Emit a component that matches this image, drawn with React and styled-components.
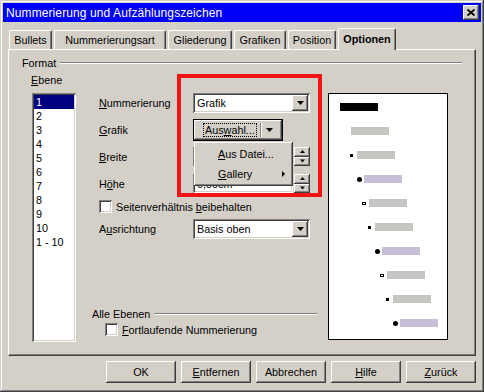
import React from 'react';
import styled, { createGlobalStyle } from 'styled-components';

const FACE = '#d4d0c8';
const RAISED = `box-shadow: inset -1px -1px #404040, inset 1px 1px #ffffff, inset -2px -2px #808080, inset 2px 2px ${FACE};`;
const SUNKEN = `box-shadow: inset 1px 1px #808080, inset -1px -1px #ffffff, inset 2px 2px #404040, inset -2px -2px ${FACE};`;

const Global = createGlobalStyle`
  html, body { margin: 0; padding: 0; background: ${FACE}; }
  body { font-family: "Liberation Sans", Arial, sans-serif; font-size: 10.8px; color: #000; }
  * { box-sizing: border-box; }
`;

const Window = styled.div`
  width: 484px;
  height: 392px;
  background: ${FACE};
  padding: 3px;
  display: flex;
  flex-direction: column;
  box-shadow: inset -1px -1px #404040, inset 1px 1px ${FACE}, inset -2px -2px #808080, inset 2px 2px #ffffff;
`;

const TitleBar = styled.div`
  height: 19px;
  background: #0000f6;
  display: flex;
  align-items: center;
  justify-content: space-between;
  padding: 0 2px 0 3px;
`;

const TitleText = styled.span`
  color: #fff;
  font-size: 12px;
  letter-spacing: 0.1px;
`;

const CloseBtn = styled.div`
  width: 16px;
  height: 15px;
  background: ${FACE};
  ${RAISED}
  display: flex;
  align-items: center;
  justify-content: center;
`;

const Content = styled.div`
  flex: 1;
  display: flex;
  flex-direction: column;
  padding: 0 5px 0 5px;
`;

const TabStrip = styled.div`
  margin-top: 6px;
  height: 21px;
  display: flex;
  align-items: flex-end;
  padding-left: 1px;
  position: relative;
  z-index: 1;
`;

const Tab = styled.div`
  width: ${p => p.$w}px;
  height: ${p => (p.$active ? 22 : 19)}px;
  margin-right: 2px;
  margin-bottom: ${p => (p.$active ? -1 : 0)}px;
  background: ${FACE};
  border-top: 1px solid #fff;
  border-left: 1px solid #fff;
  border-right: 1px solid #404040;
  border-top-left-radius: 2px;
  border-top-right-radius: 2px;
  box-shadow: inset -1px 0 #808080;
  display: flex;
  align-items: center;
  justify-content: center;
  padding-bottom: ${p => (p.$active ? 2 : 0)}px;
  font-weight: ${p => (p.$active ? 700 : 400)};
`;

const Panel = styled.div`
  height: 307px;
  background: ${FACE};
  border-top: 1px solid #fff;
  border-left: 1px solid #fff;
  border-right: 1px solid #404040;
  border-bottom: 1px solid #404040;
  box-shadow: inset -1px -1px #808080;
  display: flex;
  flex-direction: column;
`;

const GroupHeader = styled.div`
  display: flex;
  align-items: center;
  height: 13px;
  margin: ${p => p.$m};
  width: ${p => p.$w || 'auto'};
`;

const Legend = styled.span`
  padding-right: 4px;
  white-space: nowrap;
`;

const Etched = styled.div`
  flex: 1;
  height: 2px;
  border-top: 1px solid #808080;
  border-bottom: 1px solid #fff;
`;

const Body = styled.div`
  display: flex;
  margin: 5px 0 0 22px;
`;

const ListCol = styled.div`
  width: 46px;
  display: flex;
  flex-direction: column;
`;

const Label = styled.div`
  height: 13px;
  line-height: 13px;
  white-space: nowrap;
`;

const ListBox = styled.div`
  margin: 6px 0 0 1px;
  width: 44px;
  height: 249px;
  background: #fff;
  ${SUNKEN}
  padding: 2px;
`;

const ListItem = styled.div`
  height: 14px;
  line-height: 14px;
  padding-left: 2px;
  background: ${p => (p.$sel ? '#000080' : 'transparent')};
  color: ${p => (p.$sel ? '#fff' : '#000')};
`;

const FieldsCol = styled.div`
  margin: 19px 0 0 22px;
  width: 222px;
  position: relative;
  display: flex;
  flex-direction: column;
`;

const FieldRow = styled.div`
  display: flex;
  align-items: center;
  height: ${p => p.$h}px;
  margin-top: ${p => p.$mt || 0}px;
  position: relative;
`;

const FieldLabel = styled.div`
  width: 94px;
  white-space: nowrap;
`;

const Combo = styled.div`
  width: 117px;
  height: 20px;
  background: #fff;
  ${SUNKEN}
  display: flex;
  align-items: center;
  padding: 2px;
`;

const ComboText = styled.div`
  flex: 1;
  padding-left: 2px;
  white-space: nowrap;
  overflow: hidden;
`;

const DropBtn = styled.div`
  width: 16px;
  height: 16px;
  background: ${FACE};
  ${RAISED}
  display: flex;
  align-items: center;
  justify-content: center;
`;

const MenuButton = styled.div`
  width: 90px;
  height: 22px;
  border: 1px solid #000;
  background: ${FACE};
  position: relative;
`;

const MenuButtonInner = styled.div`
  height: 100%;
  ${RAISED}
  display: flex;
  align-items: center;
  padding-left: 10px;
`;

const Focus = styled.span`
  outline: 1px dotted #000;
  outline-offset: 0px;
  padding: 0 1px;
  line-height: 12px;
`;

const MenuSep = styled.div`
  width: 2px;
  height: 14px;
  margin-left: 4px;
  border-left: 1px solid #808080;
  border-right: 1px solid #fff;
`;

const MenuArrow = styled.div`
  margin-left: 4px;
  display: flex;
  align-items: center;
`;

const Popup = styled.div`
  position: absolute;
  left: 0px;
  top: 22px;
  width: 99px;
  height: 44px;
  background: ${FACE};
  ${RAISED}
  padding: 2px;
  z-index: 2;
`;

const MenuItem = styled.div`
  height: 20px;
  display: flex;
  align-items: center;
  justify-content: space-between;
  padding: 0 6px 0 22px;
  white-space: nowrap;
`;

const SpinField = styled.div`
  width: 117px;
  height: 19px;
  display: flex;
  align-items: stretch;
`;

const SpinInput = styled.div`
  flex: 1;
  background: #fff;
  ${SUNKEN}
  padding: 4px 0 0 4px;
  white-space: nowrap;
  overflow: hidden;
`;

const SpinButtons = styled.div`
  width: 16px;
  margin-left: 1px;
  display: flex;
  flex-direction: column;
`;

const SpinHalf = styled.div`
  flex: 1;
  background: ${FACE};
  ${RAISED}
  display: flex;
  align-items: center;
  justify-content: center;
`;

const Check = styled.div`
  width: 13px;
  height: 13px;
  background: #fff;
  ${SUNKEN}
  margin-right: 4px;
  flex: none;
`;

const CheckRow = styled.div`
  display: flex;
  align-items: center;
  height: 13px;
  margin: ${p => p.$m};
  white-space: nowrap;
`;

const Highlight = styled.div`
  position: absolute;
  left: 78px;
  top: -19px;
  width: 145px;
  height: 123px;
  border: 4px solid #f21414;
  pointer-events: none;
  z-index: 3;
`;

const Preview = styled.div`
  margin: 19px 0 0 7px;
  width: 120px;
  height: 247px;
  background: #fff;
  border: 1px solid #000;
  padding-top: 1px;
  display: flex;
  flex-direction: column;
`;

const PreviewRow = styled.div`
  height: 24px;
  display: flex;
  align-items: center;
  padding-left: ${p => p.$x}px;
`;

const BulletSlot = styled.div`
  width: 7px;
  display: flex;
  align-items: center;
`;

const Bullet = styled.div`
  background: #000;
  ${p => p.$kind === 'square' && 'width: 3px; height: 3px;'}
  ${p => p.$kind === 'dot' && 'width: 5px; height: 5px; border-radius: 50%;'}
  ${p => p.$kind === 'ring' && 'width: 4px; height: 3px; background: #fff; border: 1px solid #000;'}
`;

const Bar = styled.div`
  width: 38px;
  height: 8px;
  background: ${p => p.$c};
`;

const ButtonRow = styled.div`
  display: flex;
  justify-content: flex-end;
  gap: 5px;
  margin-top: 5px;
`;

const Button = styled.div`
  width: 70px;
  height: 22px;
  background: ${FACE};
  ${RAISED}
  display: flex;
  align-items: center;
  justify-content: center;
`;

const Mn = styled.span`
  text-decoration: underline;
  text-underline-offset: 1px;
`;

const Down = ({ w = 7 }) => (
  <svg width={w} height={4} viewBox="0 0 7 4"><path d="M0 0h7L3.5 4z" fill="#000" /></svg>
);

const Up = () => (
  <svg width="5" height="3" viewBox="0 0 5 3"><path d="M2.5 0L5 3H0z" fill="#000" /></svg>
);

const tabs = [
  { t: 'Bullets', w: 43 },
  { t: 'Nummerierungsart', w: 112 },
  { t: 'Gliederung', w: 64 },
  { t: 'Grafiken', w: 52 },
  { t: 'Position', w: 48 },
  { t: 'Optionen', w: 58, active: true },
];

const levels = ['1', '2', '3', '4', '5', '6', '7', '8', '9', '10', '1 - 10'];

const GREY = '#c4c6c0';
const LILAC = '#c8bed6';
const preview = [
  { x: 4, kind: null, c: '#000' },
  { x: 15, kind: null, c: GREY },
  { x: 21, kind: 'square', c: GREY },
  { x: 28, kind: 'dot', c: LILAC },
  { x: 33, kind: 'ring', c: '#c6c4c4' },
  { x: 39, kind: 'square', c: GREY },
  { x: 46, kind: 'dot', c: LILAC },
  { x: 51, kind: 'ring', c: '#c6c4c4' },
  { x: 57, kind: 'square', c: GREY },
  { x: 64, kind: 'dot', c: LILAC },
];

export default function App() {
  return (
    <>
      <Global />
      <Window>
        <TitleBar>
          <TitleText>Nummerierung und Aufzählungszeichen</TitleText>
          <CloseBtn>
            <svg width="8" height="7" viewBox="0 0 8 7">
              <path d="M0.5 0.5L7.5 6.5M7.5 0.5L0.5 6.5" stroke="#000" strokeWidth="1.8" />
            </svg>
          </CloseBtn>
        </TitleBar>
        <Content>
          <TabStrip>
            {tabs.map(t => (
              <Tab key={t.t} $w={t.w} $active={t.active}>{t.t}</Tab>
            ))}
          </TabStrip>
          <Panel>
            <GroupHeader $m="6px 13px 0 13px">
              <Legend>Format</Legend>
              <Etched />
            </GroupHeader>
            <Body>
              <ListCol>
                <Label><Mn>E</Mn>bene</Label>
                <ListBox>
                  {levels.map((l, i) => (
                    <ListItem key={l} $sel={i === 0}>{l}</ListItem>
                  ))}
                </ListBox>
              </ListCol>
              <FieldsCol>
                <Highlight />
                <FieldRow $h={20}>
                  <FieldLabel><Mn>N</Mn>ummerierung</FieldLabel>
                  <Combo>
                    <ComboText>Grafik</ComboText>
                    <DropBtn><Down /></DropBtn>
                  </Combo>
                </FieldRow>
                <FieldRow $h={22} $mt={6}>
                  <FieldLabel><Mn>G</Mn>rafik</FieldLabel>
                  <MenuButton>
                    <MenuButtonInner>
                      <Focus>Aus<Mn>w</Mn>ahl...</Focus>
                      <MenuSep />
                      <MenuArrow><Down /></MenuArrow>
                    </MenuButtonInner>
                    <Popup>
                      <MenuItem><span><Mn>A</Mn>us Datei...</span></MenuItem>
                      <MenuItem>
                        <span><Mn>G</Mn>allery</span>
                        <svg width="3" height="6" viewBox="0 0 3 6"><path d="M0 0L3 3L0 6z" fill="#000" /></svg>
                      </MenuItem>
                    </Popup>
                  </MenuButton>
                </FieldRow>
                <FieldRow $h={19} $mt={6}>
                  <FieldLabel><Mn>B</Mn>reite</FieldLabel>
                  <SpinField>
                    <SpinInput />
                    <SpinButtons>
                      <SpinHalf><Up /></SpinHalf>
                      <SpinHalf><Down w={5} /></SpinHalf>
                    </SpinButtons>
                  </SpinField>
                </FieldRow>
                <FieldRow $h={19} $mt={8}>
                  <FieldLabel>H<Mn>ö</Mn>he</FieldLabel>
                  <SpinField>
                    <SpinInput>0,50cm</SpinInput>
                    <SpinButtons>
                      <SpinHalf><Up /></SpinHalf>
                      <SpinHalf><Down w={5} /></SpinHalf>
                    </SpinButtons>
                  </SpinField>
                </FieldRow>
                <CheckRow $m="7px 0 0 0">
                  <Check />
                  <span>Seitenverhältnis <Mn>b</Mn>eibehalten</span>
                </CheckRow>
                <FieldRow $h={20} $mt={6}>
                  <FieldLabel>A<Mn>u</Mn>srichtung</FieldLabel>
                  <Combo>
                    <ComboText>Basis oben</ComboText>
                    <DropBtn><Down /></DropBtn>
                  </Combo>
                </FieldRow>
                <GroupHeader $m="68px 0 0 -7px" $w="225px">
                  <Legend>Alle Ebenen</Legend>
                  <Etched />
                </GroupHeader>
                <CheckRow $m="3px 0 0 6px">
                  <Check />
                  <span><Mn>F</Mn>ortlaufende Nummerierung</span>
                </CheckRow>
              </FieldsCol>
              <Preview>
                {preview.map((r, i) => (
                  <PreviewRow key={i} $x={r.x}>
                    <BulletSlot>{r.kind && <Bullet $kind={r.kind} />}</BulletSlot>
                    <Bar $c={r.c} />
                  </PreviewRow>
                ))}
              </Preview>
            </Body>
          </Panel>
          <ButtonRow>
            <Button>OK</Button>
            <Button><Mn>E</Mn>ntfernen</Button>
            <Button>Abbrechen</Button>
            <Button><Mn>H</Mn>ilfe</Button>
            <Button><Mn>Z</Mn>urück</Button>
          </ButtonRow>
        </Content>
      </Window>
    </>
  );
}
